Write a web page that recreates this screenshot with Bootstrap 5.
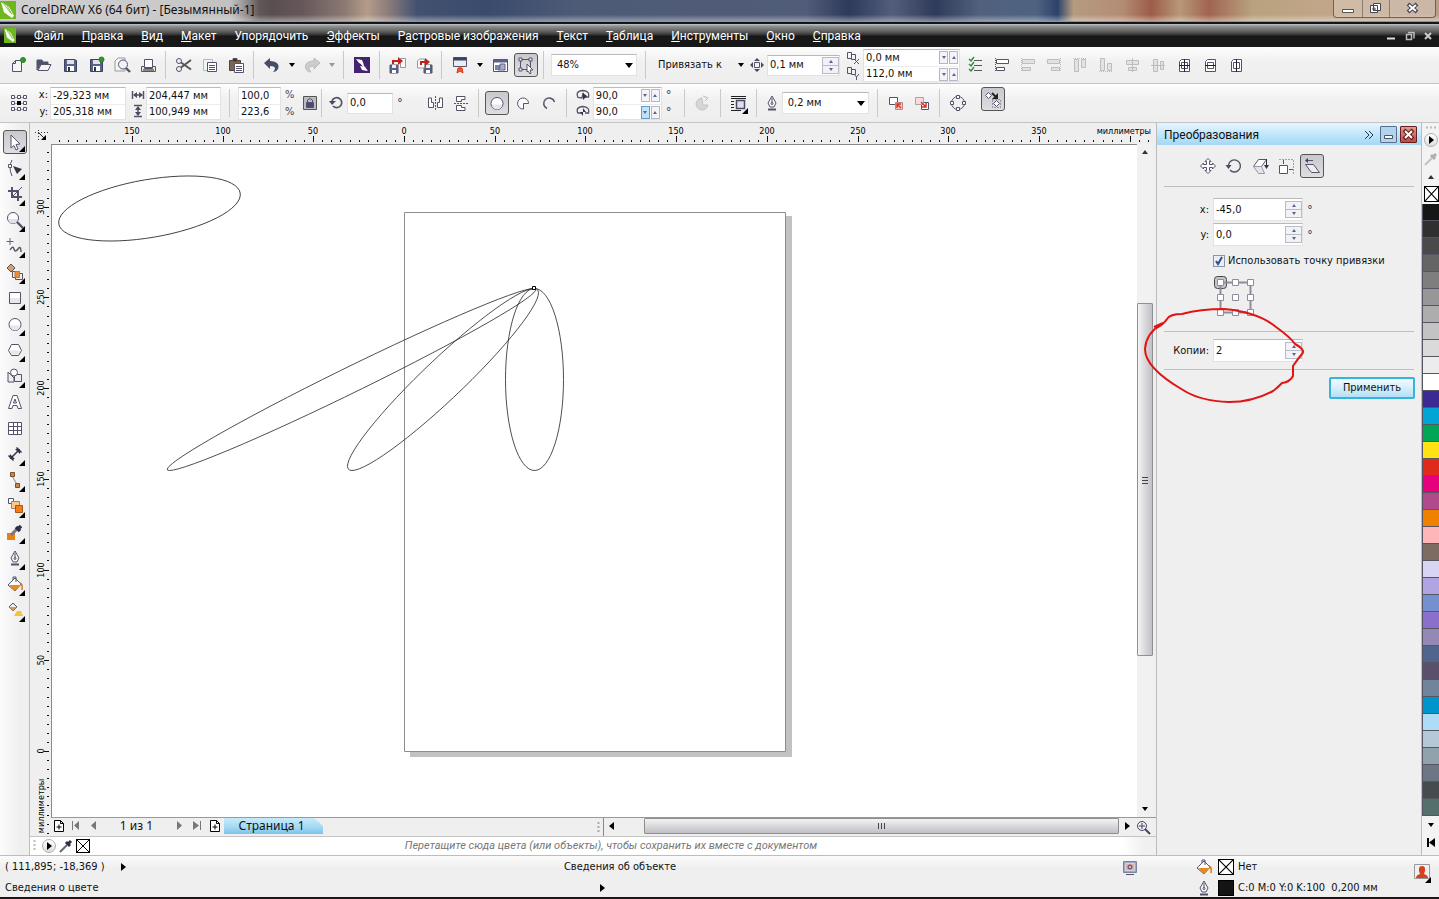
<!DOCTYPE html>
<html lang="ru">
<head>
<meta charset="utf-8">
<meta name="viewport" content="width=device-width, initial-scale=1">
<title>CorelDRAW X6 (64 бит) - [Безымянный-1]</title>
<link rel="stylesheet" href="https://cdn.jsdelivr.net/npm/bootstrap@5.3.0/dist/css/bootstrap.min.css">
<style>
:root{--face:#efefef;--line:#bdbdbd;--ink:#53536a}
body{font:11px/14px "DejaVu Sans Condensed","Noto Sans",sans-serif;color:#111;background:var(--face);overflow:hidden}
button,input,select{font:inherit;color:inherit}
button{background:none;border:0;padding:0}
svg{display:block;flex:none}
.ico{width:20px;height:20px;fill:none;stroke:var(--ink)}
/* window frame */
.titlebar{height:22px;font:12px/20px "Noto Sans",sans-serif;border-bottom:1px solid #8d9098;
 background:linear-gradient(#fff0 70%,#ffffff60),linear-gradient(90deg,#a8a8a8 0,#bcbcbc 16%,#544a4c 18%,#66585a 21%,#8c7a72 24%,#b49c88 25.5%,#8b7c7c 27%,#42516f 29%,#3a4b6c 34%,#4e5b77 40%,#505c78 56%,#2e3a5b 59%,#525e7a 62%,#2f3b5a 65%,#50607d 68%,#4f6482 72%,#2c4369 73.5%,#b59b80 74.6%,#b48c74 78%,#9c5c48 80%,#b89878 82%,#a06450 84%,#b8a27e 87%,#c2a68a 92%,#b89e88 100%)}
.glow{background:linear-gradient(90deg,#d0d0d0,#cacaca 60%,#cacaca00)}
.winbtns{height:18px;border:1px solid #6d6258;border-top:0;border-radius:0 0 4px 4px;background:#ffffff40;margin-right:3px}
.winbtns button+button{border-left:1px solid #8a7c70}
.menubar{height:25px;background:linear-gradient(#c4c6c4 0,#8f918f 10%,#555 36%,#303030 48%,#181818 52%,#181818);border-top:2px solid #111722;font:12px/20px Roboto,sans-serif;color:#fff}
.menubar a{color:#fff;text-decoration:none}
.menubar .entries{gap:18px;margin-left:18px}
/* tool bars */
.bar{background:linear-gradient(#fdfdfd,#f1f1f1 40%,#eee);border-bottom:1px solid #c4c4c4;padding-left:5px}
.bar-std{height:37px}.bar-prop{height:39px}
.tool{width:26px;height:24px;display:flex;align-items:center;justify-content:center;flex:none;position:relative}
.tool.on{width:24px;margin:0 1px;border:1px solid #555;border-radius:3px;background:linear-gradient(#c9c9cd,#dedee2)}
.drop{width:14px;height:24px;flex:none;display:flex;align-items:center;justify-content:center}
.caret{width:0;height:0;border:3px solid transparent;border-top:4px solid #000;border-bottom:0}
.caret.up{border-bottom:4px solid #333;border-top:0}
.caret.dim{border-top-color:#999}
.sep{width:1px;height:28px;background:#c9c9c9;margin:0 5px 0 4px;flex:none}
.field{background:#fff;border:1px solid #e2e2e2;border-top-color:#b9b9b9;display:flex;align-items:center;height:21px}
.field input,.pair input{border:0;background:none;outline:0;padding:0 0 0 2px;min-width:0;width:100%}
.pair{background:#fff;border:1px solid #e2e2e2;border-top-color:#b4bccb;height:33px;flex:none}
.pair>div{height:16px;display:flex;align-items:center}
.pair>div+div{border-top:1px solid #ececec}
.combo{appearance:none;border:1px solid #e2e2e2;border-top-color:#b9b9b9;height:22px;padding:0 5px;flex:none;
 background:#fff url("data:image/svg+xml,%3Csvg xmlns='http://www.w3.org/2000/svg' width='8' height='5'%3E%3Cpath d='M0 0h8L4 5z'/%3E%3C/svg%3E") no-repeat right 3px center}
.mini{width:9px;height:13px;border:1px solid #b4b8c6;background:#f4f4f8;display:flex;align-items:center;justify-content:center;flex:none;margin-right:1px}
.mini.hot{background:#bfe3f8;border-color:#5f9dc8}
.mini .caret,.spin .caret{border-width:2px;border-top:3px solid #5a6494}
.mini .caret.up,.spin .caret.up{border-top:0;border-bottom:3px solid #5a6494}
.spin{width:17px;flex:none}
.spin button{height:9px;width:17px;border:1px solid #b8bcc8;background:#f2f2f6;display:flex;align-items:center;justify-content:center}
.spin button+button{margin-top:-1px}
.lbl{text-align:right;white-space:pre}
.deg{font-size:13px;color:#445}
/* tool box */
.toolbox{width:30px;background:linear-gradient(90deg,#fcfcfc,#efefef 70%);border-right:1px solid #bcbcbc;padding-top:6px;flex:none}
.toolbox .tool{height:26px;width:29px}
.toolbox .tool.on{height:24px;width:24px;margin:1px 3px}
.fly::after{content:"";position:absolute;right:4px;bottom:1px;border:3px solid transparent;border-right-color:#000;border-bottom-color:#000}
.toolbox .on.fly::after{right:1px;bottom:1px}
/* drawing window */
.ruler-h{height:21px}.ruler-v{width:21px}
.rule{font-size:9px}
.paper{background:#fff;border-left:1px solid #8a8a8a;border-top:1px solid #8a8a8a;position:relative;overflow:hidden}
.vscroll{width:16px;margin-right:3px;background:#f1f1f1}
.vscroll .arrow,.hscroll .arrow{width:16px;height:16px;display:flex;align-items:center;justify-content:center;flex:none}
.vthumb{border:1px solid #8f8f8f;border-radius:1px;background:linear-gradient(90deg,#f4f4f4,#dcdcde 45%,#c0c0c6)}
.hthumb{border:1px solid #8f8f8f;border-radius:1px;background:linear-gradient(#f4f4f4,#dcdcde 45%,#c0c0c6);height:16px}
.pages{height:19px;border-top:1px solid #999}
.pagetext{font:12px/16px "Noto Sans",sans-serif}
.pagetab{width:99px;height:16px;background:linear-gradient(#c8eafa,#a5daf5 55%,#7cc3ea);clip-path:polygon(0 0,91% 0,100% 50%,100% 100%,0 100%)}
.docpal{height:19px;background:linear-gradient(90deg,#fff 97%,#f0f0f0 99%);border-top:1px solid #c4c4c4}
.docpal em{color:#777;font:italic 11px/16px Roboto,sans-serif}
.round{width:14px;height:14px;border:1px solid #b0b0b0;border-radius:50%;background:linear-gradient(#fff,#ddd);display:flex;align-items:center;justify-content:center}
.round::after,.play{content:"";width:0;height:0;border:4px solid transparent;border-left:5px solid #000;border-right:0}
.round::after{margin-left:1px}
.play{display:inline-block}
.none{width:14px;height:14px;background:#fff;border:1px solid #000;flex:none}
/* docker */
.docker{width:266px;border-left:1px solid #bcbcbc;border-right:1px solid #bcbcbc;flex:none;position:relative}
.dockhead{height:21px;margin-top:1px;padding-left:7px;background:linear-gradient(#e4f5fe,#bfe6fb 50%,#a4d8f5);font:12px/20px Roboto,sans-serif}
.dockhead button{width:17px;height:17px;border:1px solid #56708e;background:#b5d3ec;border-radius:1px}
.dockhead .shut{border-color:#6a1d1d;background:linear-gradient(#e09a90,#c04a44)}
.rulerline{height:1px;background:#bfbfbf;margin:0 7px}
.dockrow{margin-left:14px;gap:4px}
.dockrow .lbl{width:38px}
.dockrow .field{width:90px;height:23px}
.apply{width:86px;height:22px;margin:7px 6px 0 auto;border:2px solid #35b4dc;border-radius:2px;background:linear-gradient(#f1fafd,#d8effa 48%,#b4e0f4)}
.tick{appearance:none;width:12px;height:12px;margin:0;border:1px solid #8496ac;flex:none;
 background:#e9eff6 url("data:image/svg+xml,%3Csvg xmlns='http://www.w3.org/2000/svg' width='10' height='10'%3E%3Cpath d='M2 5l2 3l4-7' fill='none' stroke='%233a4c88' stroke-width='2'/%3E%3C/svg%3E") center no-repeat}
.scribble{position:absolute;left:-17px;top:181px;pointer-events:none}
/* colour column */
.palette{width:17px;background:#f3f3f3;flex:none}
.swatch{height:17px;border-bottom:1px solid #565660;border-left:1px solid #565660;width:17px}
.status{height:44px;background:linear-gradient(#fbfbfb,#efefef 30%);border-top:1px solid #bdbdbd;border-bottom:2px solid #1c1518;padding-left:5px}
.status .line{height:21px;display:flex;align-items:center}
.outlinecolor{background:#141414}
</style>
</head>
<body class="vh-100 d-flex flex-column">
<svg width="0" height="0" class="position-absolute" aria-hidden="true">
<symbol id="corel" viewBox="0 0 16 16" preserveAspectRatio="none"><path d="M0 0h16v16H0z" fill="#6fb71f" stroke="none"/><path d="M1 1l8 4 5 8-2 2-8-5z" fill="#fff" stroke="none"/><path d="M4 3l7 8M7 4l5 8" stroke="#6fb71f" stroke-width=".8"/></symbol>
<symbol id="new" viewBox="0 0 20 20"><path d="M4.500 8.500l3-3h6v11h-9z" fill="#f6f6f6"/><path d="M4.500 8.500h3v-3"/><circle cx="15" cy="5" r="2.500" fill="#2e9b25" stroke="#2e7d25"/></symbol>
<symbol id="open" viewBox="0 0 20 20"><path d="M3 15V5h5l1 2h5v3H6z" fill="#4b5274"/><path d="M4 15.500l3-6h10l-3 6z" fill="#f4f4f4"/></symbol>
<symbol id="save" viewBox="0 0 20 20"><path d="M4.500 4.500h10l2 1v11h-12z" fill="#5a6288" stroke="#3b4263"/><path d="M7 5h7v4H7z" fill="#dfe1ea" stroke="none"/><path d="M7 11h7v5H7z" fill="#fff" stroke="none"/><path d="M8 12h2v4H8z" fill="#334" stroke="none"/></symbol>
<symbol id="saveas" viewBox="0 0 20 20"><use href="#save"/><circle cx="15.500" cy="4.500" r="2.500" fill="#2e9b25" stroke="#2e7d25"/></symbol>
<symbol id="preview" viewBox="0 0 20 20"><path d="M3 16V6l3-3h7v13z" fill="#f4f4f4" stroke="#999"/><circle cx="11" cy="9.500" r="4.500" fill="#eef3fa"/><path d="M14 13l4 4" stroke-width="2.400"/></symbol>
<symbol id="print" viewBox="0 0 20 20"><path d="M6.500 4.500h8v8h-8z" fill="#fff"/><path d="M3.500 11.500h3v2h8v-2h3v5h-14z" fill="#e8eadf"/><path d="M5 15h11" stroke="#222"/></symbol>
<symbol id="cut" viewBox="0 0 20 20"><circle cx="5" cy="6" r="2.500"/><circle cx="5" cy="14" r="2.500"/><path d="M7 7.500l10 7M7 12.500l10-7.500" stroke-width="2" stroke="#555"/></symbol>
<symbol id="copy" viewBox="0 0 20 20"><path d="M3.500 4.500h9v11h-9z" fill="#eef6f0" stroke="#a8c0b4"/><path d="M7.500 7.500h9v9h-9z" fill="#fff"/><path d="M9 10.500h6M9 12.500h6M9 14.500h6"/></symbol>
<symbol id="paste" viewBox="0 0 20 20"><path d="M3.500 5.500h11v10h-11z" fill="#7c6650" stroke="#54432f"/><path d="M7 3.500h4v3H7z" fill="#333"/><path d="M8.500 8.500h9v9h-9z" fill="#fff"/><path d="M10 11.500h6M10 13.500h6M10 15.500h6"/></symbol>
<symbol id="undo" viewBox="0 0 20 20"><path d="M2 8l6-5v3c7 0 10 4 8 8-1 2-3 3-5 3 3-3 3-6-3-6v3z" fill="#474d68" stroke="none"/></symbol>
<symbol id="redo" viewBox="0 0 20 20"><path d="M18 8l-6-5v3c-7 0-10 4-8 8 1 2 3 3 5 3-3-3-3-6 3-6v3z" fill="#ccc" stroke="#bbb"/></symbol>
<symbol id="launch" viewBox="0 0 20 20"><path d="M2 2h16v16H2z" fill="#44246e" stroke="none"/><path d="M4 4l6 1 2 5-5-2zM16 16l-6-1-2-4 5 1z" fill="#fff" stroke="none"/><path d="M7 5l7 10" stroke="#fff" stroke-width="1.500"/></symbol>
<symbol id="import" viewBox="0 0 20 20"><path d="M2 10h8v8H2z" fill="#5a6288"/><path d="M4 10h4v3H4z" fill="#eee" stroke="none"/><path d="M4 15h4v3H4z" fill="#fff" stroke="none"/><path d="M12.500 3.500h5v9h-5z" fill="#fafafa" stroke="#999"/><path d="M5 9V6h6" stroke="#c0201a" stroke-width="2"/><path d="M10 2l5 4-5 4z" fill="#c0201a" stroke="none"/></symbol>
<symbol id="export" viewBox="0 0 20 20"><path d="M10 10h8v8h-8z" fill="#5a6288"/><path d="M12 10h4v3h-4z" fill="#eee" stroke="none"/><path d="M12 15h4v3h-4z" fill="#fff" stroke="none"/><path d="M3.500 6l2-2h5v9h-7z" fill="#fafafa" stroke="#999"/><path d="M7 10V7h5" stroke="#c0201a" stroke-width="2"/><path d="M11 3l5 4-5 4z" fill="#c0201a" stroke="none"/></symbol>
<symbol id="welcome" viewBox="0 0 20 20"><path d="M3.500 2.500h13v9h-13z" fill="#e8ecf4"/><path d="M3.500 4h13" stroke-width="3" stroke="#3b4263"/><path d="M10 11v2M7 18l1-5h4l1 5-3-2z" fill="#f05a28" stroke="#d83a1a"/></symbol>
<symbol id="window" viewBox="0 0 20 20"><path d="M3.500 4.500h14v12h-14z" fill="#fff"/><path d="M4 6h13" stroke-width="3" stroke="#5a6288"/><path d="M5 10h6v5H5z" fill="#7a84aa" stroke="none"/><path d="M10 9h5v6h-7l2-2z" fill="#a7aec8" stroke="#5a6288"/></symbol>
<symbol id="snap" viewBox="0 0 20 20"><path d="M4.500 4.500h10v10h-10z"/><path d="M3 3h3v3H3zM13 3h3v3h-3zM3 13h3v3H3z" fill="#eee"/><path d="M11 9l6 6-3 0 1 3-1 1-2-3-1 1z" fill="#fff"/></symbol>
<symbol id="nudge" viewBox="0 0 20 20"><path d="M7.500 7.500h5v5h-5z"/><path d="M10 3l3 3H7zM10 17l3-3H7zM3 10l3-3v6zM17 10l-3-3v6z" fill="#4a4a62" stroke="none"/></symbol>
<symbol id="dupx" viewBox="0 0 14 16"><path d="M1.500 3.500h4v6h-4zM5.500 5.500h4v5h-4zM8 10l5 5M13 10l-5 5"/></symbol>
<symbol id="dupy" viewBox="0 0 14 16"><path d="M1.500 2.500h4v6h-4zM5.500 4.500h4v5h-4zM8 9l2.500 3L13 9M10.500 12v3"/></symbol>
<symbol id="options" viewBox="0 0 20 20"><path d="M3 4l2 2 3-4M3 9l2 2 3-4M3 14l2 2 3-4" stroke="#2f8a3a" stroke-width="1.400"/><path d="M8 5.500h8M8 10.500h8M8 15.500h8" stroke="#556"/></symbol>
<symbol id="al" viewBox="0 0 20 20"><path d="M3.500 3v14" stroke-dasharray="1 1"/><path d="M4.500 4.500h12v4h-12zM4.500 12.500h8v3h-8z" fill="#fff"/></symbol>
<symbol id="al2" viewBox="0 0 20 20"><path d="M3.500 3v14" stroke-dasharray="1 1"/><path d="M4.500 4.500h12v4h-12zM4.500 12.500h8v3h-8z" fill="#e2e2e2"/></symbol>
<symbol id="ar" viewBox="0 0 20 20"><path d="M16.500 3v14" stroke-dasharray="1 1"/><path d="M3.500 4.500h12v4h-12zM7.500 12.500h8v3h-8z" fill="#e2e2e2"/></symbol>
<symbol id="at" viewBox="0 0 20 20"><path d="M3 3.500h14" stroke-dasharray="1 1"/><path d="M4.500 4.500h4v12h-4zM11.500 4.500h4v8h-4z" fill="#e2e2e2"/></symbol>
<symbol id="ab" viewBox="0 0 20 20"><path d="M3 16.500h14" stroke-dasharray="1 1"/><path d="M4.500 3.500h4v12h-4zM11.500 8.500h4v7h-4z" fill="#e2e2e2"/></symbol>
<symbol id="ac" viewBox="0 0 20 20"><path d="M4.500 5.500h12v4h-12zM6.500 12.500h8v3h-8z" fill="#e2e2e2"/><path d="M10.500 3v14"/></symbol>
<symbol id="am" viewBox="0 0 20 20"><path d="M5.500 4.500h4v12h-4zM12.500 6.500h3v8h-3z" fill="#e2e2e2"/><path d="M3 10.500h14"/></symbol>
<symbol id="p1" viewBox="0 0 20 20"><path d="M5.500 6.500l2-2h8v12h-10zM7.500 7.500h6v6h-6z" fill="#fff"/><path d="M5 10.500h11M10.500 4v13" stroke="#223"/></symbol>
<symbol id="p2" viewBox="0 0 20 20"><path d="M5.500 6.500l2-2h8v12h-10z" fill="#fff"/><path d="M7.500 7.500h6v6h-6z"/><path d="M5 10.500h11" stroke="#223"/></symbol>
<symbol id="p3" viewBox="0 0 20 20"><path d="M5.500 6.500l2-2h8v12h-10z" fill="#fff"/><path d="M7.500 7.500h6v6h-6z"/><path d="M10.500 4v13" stroke="#223"/></symbol>
<symbol id="origin" viewBox="0 0 20 20"><path d="M4 4.500h12M4 10.500h12M4 16.500h12" stroke="#9aa"/><g fill="#fff"><path d="M2.500 2.500h3v3h-3zM8.500 2.500h3v3h-3zM14.500 2.500h3v3h-3zM2.500 8.500h3v3h-3zM14.500 8.500h3v3h-3zM2.500 14.500h3v3h-3zM8.500 14.500h3v3h-3zM14.500 14.500h3v3h-3z"/></g><path d="M8 8h4v4H8z" fill="#000" stroke="none"/></symbol>
<symbol id="width" viewBox="0 0 14 14"><path d="M1.500 3v8M12.500 3v8M3 7h8" stroke-width="1.500"/><path d="M6 4v6L2 7zM8 4v6l4-3z" fill="#4a4a62" stroke="none"/></symbol>
<symbol id="height" viewBox="0 0 14 14"><path d="M3 1.500h8M3 12.500h8M7 3v8" stroke-width="1.500"/><path d="M4 6h6L7 2zM4 8h6l-3 4z" fill="#4a4a62" stroke="none"/></symbol>
<symbol id="lock" viewBox="0 0 14 14"><path d="M.5.500h13v13H.5z" fill="#bcbcc6" stroke="#555"/><path d="M4.500 6V4q2.500-3 5 0v2"/><path d="M3.500 6.500h7v5h-7z" fill="#4a4a72"/></symbol>
<symbol id="rotate" viewBox="0 0 20 20"><path d="M5 8a5 5 0 1 1 1 5" stroke-width="1.700"/><path d="M2 8h7l-4 4z" fill="#4a4a62" stroke="none"/></symbol>
<symbol id="turn" viewBox="0 0 20 20"><path d="M4.500 9a6 6 0 1 1 1.500 5" stroke-width="1.400"/><path d="M1.500 9h6l-3 4z" fill="#4a4a62" stroke="none"/></symbol>
<symbol id="mirh" viewBox="0 0 20 20"><path d="M10.500 3v14" stroke-dasharray="2 1"/><path d="M3.500 5v9.500h5v-5h-2V5zM17.500 5v9.500h-5v-5h2V5z" fill="#fff"/></symbol>
<symbol id="mirv" viewBox="0 0 20 20"><path d="M3 10.500h15" stroke-dasharray="2 1"/><path d="M14 3.500H5.500v5h5v-2H14zM14 17.500H5.500v-5h5v2H14z" fill="#fff"/></symbol>
<symbol id="ell" viewBox="0 0 20 20"><circle cx="10" cy="10.500" r="6" fill="#fff"/><path d="M5 11.500h10a5 5 0 0 1-10 0z" fill="#e6e6ec" stroke="none"/></symbol>
<symbol id="pie" viewBox="0 0 20 20"><path d="M10.500 10.500V16A5.500 5.500 0 1 1 15.500 9.500v1z" fill="#fff"/></symbol>
<symbol id="arc" viewBox="0 0 20 20"><path d="M8 15.500A5.500 5.500 0 1 1 15.500 9" stroke-width="1.500"/></symbol>
<symbol id="ang1" viewBox="0 0 14 14"><path d="M2 9.500Q-1 3 7 2.500 14 3 12.500 9H8l-1-4-1 5z" stroke-width="1.300"/><path d="M7 5v7l4-4z" fill="#334" stroke="none"/></symbol>
<symbol id="ang2" viewBox="0 0 14 14"><path d="M2 9.500Q-1 3 7 2.500 14 3 12.500 9H9M2 9h4" stroke-width="1.300"/><path d="M7 4v8l-3-4h6z" fill="#334" stroke="none"/></symbol>
<symbol id="dir" viewBox="0 0 20 20"><path d="M9 5a6 6 0 1 0 6 7h-5z" fill="#d6d6d6" stroke="#c4c4c4"/><path d="M10 3l5 2-3 3" stroke="#bbb"/></symbol>
<symbol id="wrap" viewBox="0 0 20 20"><path d="M2 3.500h15M2 5.500h15M2 8.500h3M2 11.500h3M2 14.500h3M2 17.500h10" stroke="#222"/><path d="M7.500 7.500h8v8h-8z" fill="#dde0ec" stroke="#4a4a62" stroke-width="1.500"/></symbol>
<symbol id="nib" viewBox="0 0 20 20"><path d="M10 3l4 7-2 4H8l-2-4z" fill="#f6f6f6"/><path d="M10 5v5"/><circle cx="10" cy="10.500" r="1"/><path d="M6 16.500h8" stroke-width="2"/></symbol>
<symbol id="tofront" viewBox="0 0 20 20"><path d="M3.500 4.500h8v7h-8z" fill="#fff"/><path d="M9.500 9.500h7v7h-7z" fill="#f7c9c4" stroke="#b9868c"/><path d="M15 15l-4-4m0 4v-4h4" stroke="#d8341e" stroke-width="1.500"/></symbol>
<symbol id="toback" viewBox="0 0 20 20"><path d="M9.500 9.500h7v7h-7z" fill="#fff"/><path d="M3.500 4.500h8v7h-8z" fill="#f7dcdc" stroke="#b99aa8"/><path d="M9 9l5 5m0-4v4h-4" stroke="#d8341e" stroke-width="1.500"/></symbol>
<symbol id="curves" viewBox="0 0 20 20"><circle cx="10" cy="10" r="6.500"/><path d="M8.500 2.500h3v3h-3zM8.500 14.500h3v3h-3zM2.500 8.500h3v3h-3zM14.500 8.500h3v3h-3z" fill="#fff"/></symbol>
<symbol id="treat" viewBox="0 0 20 20"><path d="M2.500 6.500l3-3 3 3-3 3zM10.500 14.500l3-3 3 3-3 3z" fill="#fff"/><path d="M9 4l4 4" stroke="#222" stroke-width="2"/><path d="M15 4v6H9z" fill="#222" stroke="none"/><path d="M9.500 10.500h8v8h-8z" stroke-dasharray="1 2"/></symbol>
<symbol id="pick" viewBox="0 0 20 20"><path d="M6 3l9 9-4 .5 2 4.500-2 1-2-4.500-3 2.500z" fill="#fff" stroke="#556"/></symbol>
<symbol id="shape" viewBox="0 0 20 20"><path d="M7 2q-4 7 0 16" /><path d="M3.500 6.500h3v3h-3z" fill="#fff"/><path d="M8 8l9 3-5 5z" fill="#334" stroke="none"/></symbol>
<symbol id="crop" viewBox="0 0 20 20"><path d="M7 3v10h10M3 7h10v10" stroke-width="2"/><path d="M7 13L17 3"/></symbol>
<symbol id="zoomt" viewBox="0 0 20 20"><circle cx="8" cy="8" r="5.500" fill="#fff"/><path d="M3.500 9h9a4.500 4.500 0 0 1-9 0z" fill="#dfe2ee" stroke="none"/><path d="M12 12l6 6" stroke-width="2.400"/></symbol>
<symbol id="free" viewBox="0 0 20 20"><path d="M5 2v7M1.500 5.500h7" stroke="#667"/><path d="M5 14q3-5 4-1t4 0 3 3" stroke="#556" stroke-width="1.400"/></symbol>
<symbol id="smart" viewBox="0 0 20 20"><path d="M2 6l4-4 4 4-4 4z" fill="#d9a060"/><path d="M7.500 9.500h7v6h-7z" fill="#eee"/><path d="M10.500 11.500h7v6h-7z" fill="#f4ece4" fill-opacity=".8"/><path d="M10 9.500h4.500v6H10z" fill="#ea8b3c" stroke="#c4763a"/></symbol>
<symbol id="rect" viewBox="0 0 20 20"><path d="M4.500 4.500h11v11h-11z" fill="#fff"/><path d="M5 10h10v5H5z" fill="#e6e6ec" stroke="none"/></symbol>
<symbol id="poly" viewBox="0 0 20 20"><path d="M3.500 10.500l3-6h7l3 6-3 5h-7z" fill="#fff"/><path d="M5 10.500h10l-2 4H7z" fill="#e6e6ec" stroke="none"/></symbol>
<symbol id="basic" viewBox="0 0 20 20"><path d="M3 6l6 6v4H3z" fill="#eee"/><path d="M9.500 8.500h7v7h-7z" fill="#eee"/><circle cx="9" cy="6.500" r="3.500" fill="#fff"/></symbol>
<symbol id="textt" viewBox="0 0 20 20"><path d="M8 3.500h4l4.500 13h-3.500l-1-3h-4l-1 3H3.500zM10 7l-1.500 4h3z" fill="#fff"/></symbol>
<symbol id="table" viewBox="0 0 20 20"><path d="M3.500 4.500h13v12h-13zM3.500 8.500h13M3.500 12.500h13M8.500 4v12M12.500 4v12" fill="#fff"/></symbol>
<symbol id="dim" viewBox="0 0 20 20"><path d="M6 14l8-8M3.500 11.500l5 5M11.500 3.500l5 5" stroke="#334" stroke-width="1.500"/><path d="M5 10v5h5zM15 10V5h-5z" fill="#334" stroke="none"/></symbol>
<symbol id="conn" viewBox="0 0 20 20"><path d="M7 6l6 10" stroke="#889"/><path d="M5.500 2.500h4v4h-4zM10.500 13.500h4v4h-4z" fill="#c98744" stroke="#7b4d28"/></symbol>
<symbol id="blend" viewBox="0 0 20 20"><path d="M3.500 2.500h5v5h-5z" fill="#fff"/><path d="M6.500 5.500h8v7h-8z" fill="#fbc98a" stroke="#a77"/><path d="M10.500 9.500h7v7h-7z" fill="#f57c14" stroke="#a4561c"/></symbol>
<symbol id="pipet" viewBox="0 0 20 20"><path d="M2 11h8v7H2z" fill="#ee7d14" stroke="none"/><path d="M6 13l6-6" stroke="#778" stroke-width="3"/><path d="M11 5l4 4M13 7l3-3" stroke="#2b3048" stroke-width="3.500"/></symbol>
<symbol id="drop1" viewBox="0 0 20 20"><path d="M4 16l7-7" stroke="#667" stroke-width="2"/><path d="M10 6l4 4M12 8l3-3" stroke="#2b3048" stroke-width="3"/></symbol>
<symbol id="fill" viewBox="0 0 20 20"><path d="M3 11l7-7 6 6-6 7z" fill="#fff"/><path d="M4 11h12l-6 6z" fill="#e88a1c" stroke="none"/><path d="M8 6V3h3v5"/><path d="M15 9q3 1 2 7" stroke="#d87820" stroke-width="1.500"/></symbol>
<symbol id="ifill" viewBox="0 0 20 20"><path d="M4 7l4-4 4 4-4 4z" fill="#eee"/><path d="M4 7h8l-4 4z" fill="#d99a52" stroke="none"/><path d="M9 16l3-5h4l2 5z" fill="#f3c43a" stroke="none"/></symbol>
<symbol id="X" viewBox="0 0 12 12" preserveAspectRatio="none"><path d="M0 0l12 12M12 0L0 12" stroke="#000" fill="none"/></symbol>
<symbol id="addpage" viewBox="0 0 12 14"><path d="M1.500 1.500h6l3 3v8h-9zM7.500 1.500v3h3M6 5.500v5M3.500 8h5" stroke="#000" fill="#fff"/></symbol>
<symbol id="move" viewBox="0 0 20 20"><path d="M10 2.500l3 3h-1.500v3h3V7l3 3-3 3v-1.500h-3v3H13l-3 3-3-3h1.500v-3h-3V13l-3-3 3-3v1.500h3v-3H7z" fill="#fff"/></symbol>
<symbol id="scale" viewBox="0 0 20 20"><path d="M3.500 10.500l5-7h8l-5 7z" fill="#fff"/><path d="M3.500 10.500l5 7h6l-3-7z" fill="#e4e4ea" stroke="#99a"/><path d="M16.500 3v7" stroke="#334"/><path d="M14 9h5l-2.500 4z" fill="#334" stroke="none"/></symbol>
<symbol id="size" viewBox="0 0 20 20"><path d="M3.500 3.500h14v14" stroke-dasharray="1 2"/><path d="M3.500 9.500h8v8h-8z" fill="#fff"/><path d="M7.500 4v4M13 13.500h4"/></symbol>
<symbol id="skew" viewBox="0 0 20 20"><path d="M3.500 8.500h8l6 8h-8z" fill="#eee"/><path d="M5 4.500h6"/><path d="M6 2v5L3 4.500z" fill="#445" stroke="none"/></symbol>
<symbol id="monitor" viewBox="0 0 20 20"><path d="M3.500 4.500h13v11h-13z" fill="#9aa6c4" stroke="#7a84a4"/><path d="M5.500 6.500h9v7h-9z" fill="#dcb0a8" stroke="#d4d4dc"/><circle cx="10" cy="10" r="2" stroke="#446"/><path d="M6 17.500h8"/></symbol>
<symbol id="user" viewBox="0 0 20 20"><path d="M2.500 2.500h15v14h-15z" fill="#eef0f4" stroke="#999"/><path d="M4 16q0-3 4-4-3-8 2-8t2 8q4 1 4 4z" fill="#d6421e" stroke="none"/></symbol>
</svg>

<header class="titlebar d-flex align-items-start flex-shrink-0">
 <div class="glow d-flex align-items-center gap-1 pe-3"><svg width="17" height="20"><use href="#corel" width="16" height="18" y="1"/></svg><span>CorelDRAW X6 (64 бит) - [Безымянный-1]</span></div>
 <div class="winbtns d-flex ms-auto">
  <button aria-label="Свернуть"><svg width="28" height="17"><path d="M8.500 9.500h11v3h-11z" fill="#fff" stroke="#555"/></svg></button>
  <button aria-label="Восстановить"><svg width="26" height="17"><path d="M10.500 3.500h7v7h-7zM7.500 5.500h7v7h-7zM10 8h2v2h-2z" fill="#fff" stroke="#445"/></svg></button>
  <button aria-label="Закрыть"><svg width="45" height="17"><path d="M18 4l9 8M27 4l-9 8" stroke="#445" stroke-width="4"/><path d="M19 5l7 6M26 5l-7 6" stroke="#fff" stroke-width="2"/></svg></button>
 </div>
</header>

<nav class="menubar d-flex align-items-center flex-shrink-0 ps-1">
 <svg width="12" height="15"><use href="#corel" width="12" height="15"/></svg>
 <div class="entries d-flex">
 <a href="#"><u>Ф</u>айл</a><a href="#"><u>П</u>равка</a><a href="#"><u>В</u>ид</a><a href="#"><u>М</u>акет</a><a href="#">Упоря<u>д</u>очить</a><a href="#"><u>Э</u>ффекты</a><a href="#">Р<u>а</u>стровые изображения</a><a href="#"><u>Т</u>екст</a><a href="#"><u>Т</u>аблица</a><a href="#"><u>И</u>нструменты</a><a href="#"><u>О</u>кно</a><a href="#"><u>С</u>правка</a></div>
 <div class="ms-auto d-flex">
  <button aria-label="Свернуть документ"><svg width="19" height="14"><path d="M4 9.500h8" stroke="#ddd" stroke-width="2"/></svg></button>
  <button aria-label="Восстановить документ"><svg width="19" height="14"><path d="M4.500 5.500h5v5h-5zM6 3.500h6v6" fill="none" stroke="#bbb" stroke-width="1.500"/></svg></button>
  <button aria-label="Закрыть документ"><svg width="18" height="14"><path d="M4 4l6 6M10 4l-6 6" stroke="#ccc" stroke-width="2"/></svg></button>
 </div>
</nav>

<div class="bar bar-std d-flex align-items-center flex-shrink-0" role="toolbar" aria-label="Стандарт">
 <button class="tool" aria-label="Создать"><svg class="ico"><use href="#new"/></svg></button>
 <button class="tool" aria-label="Открыть"><svg class="ico"><use href="#open"/></svg></button>
 <button class="tool" aria-label="Сохранить"><svg class="ico"><use href="#save"/></svg></button>
 <button class="tool" aria-label="Сохранить как"><svg class="ico"><use href="#saveas"/></svg></button>
 <button class="tool" aria-label="Просмотр"><svg class="ico"><use href="#preview"/></svg></button>
 <button class="tool" aria-label="Печать"><svg class="ico"><use href="#print"/></svg></button>
 <i class="sep"></i>
 <button class="tool" aria-label="Вырезать"><svg class="ico"><use href="#cut"/></svg></button>
 <button class="tool" aria-label="Копировать"><svg class="ico"><use href="#copy"/></svg></button>
 <button class="tool" aria-label="Вставить"><svg class="ico"><use href="#paste"/></svg></button>
 <i class="sep"></i>
 <button class="tool" aria-label="Отменить"><svg class="ico"><use href="#undo"/></svg></button>
 <button class="drop" aria-label="Список отмены"><i class="caret"></i></button>
 <button class="tool" aria-label="Повторить"><svg class="ico"><use href="#redo"/></svg></button>
 <button class="drop" aria-label="Список повтора"><i class="caret dim"></i></button>
 <i class="sep"></i>
 <button class="tool" aria-label="Запуск приложений"><svg class="ico"><use href="#launch"/></svg></button>
 <i class="sep"></i>
 <button class="tool" aria-label="Импорт"><svg class="ico"><use href="#import"/></svg></button>
 <button class="tool" aria-label="Экспорт"><svg class="ico"><use href="#export"/></svg></button>
 <i class="sep"></i>
 <button class="tool" aria-label="Запуск"><svg class="ico"><use href="#welcome"/></svg></button>
 <button class="drop" aria-label="Список запуска"><i class="caret"></i></button>
 <button class="tool" aria-label="Экран приветствия"><svg class="ico"><use href="#window"/></svg></button>
 <button class="tool on" aria-label="Выделение"><svg class="ico"><use href="#snap"/></svg></button>
 <i class="sep"></i>
 <select class="combo" style="width:86px;margin-left:2px" aria-label="Масштаб"><option>48%</option></select>
 <i class="sep ms-2 me-2"></i>
 <button class="d-flex align-items-center gap-3 ms-1 me-2 text-nowrap" style="width:81px"><span>Привязать к</span><i class="caret"></i></button>
 <svg class="ico"><use href="#nudge"/></svg>
 <div class="field" style="width:73px"><input value="0,1 мм" aria-label="Смещение"><span class="spin"><button aria-label="Больше"><i class="caret up"></i></button><button aria-label="Меньше"><i class="caret"></i></button></span></div>
 <div style="margin-left:6px"><svg class="ico" style="width:14px;height:16px"><use href="#dupx"/></svg><svg class="ico" style="width:14px;height:16px"><use href="#dupy"/></svg></div>
 <div class="pair" style="width:97px;margin-left:3px">
  <div><input value="0,0 мм" aria-label="Дублирование x"><button class="mini" aria-label="Меньше"><i class="caret"></i></button><button class="mini" aria-label="Больше"><i class="caret up"></i></button></div>
  <div><input value="112,0 мм" aria-label="Дублирование y"><button class="mini" aria-label="Меньше"><i class="caret"></i></button><button class="mini" aria-label="Больше"><i class="caret up"></i></button></div>
 </div>
 <div class="d-flex" id="align" style="margin-left:3px"></div>
</div>

<div class="bar bar-prop d-flex align-items-center flex-shrink-0" role="toolbar" aria-label="Панель свойств">
 <svg class="ico" style="margin:0 4px"><use href="#origin"/></svg>
 <div class="lbl" style="width:15px;line-height:17px"><label for="px">x:</label><br><label for="py">y:</label></div>
 <div class="pair" style="width:76px;margin-left:2px"><div><input id="px" value="-29,323 мм"></div><div><input id="py" value="205,318 мм"></div></div>
 <div style="margin:0 1px 0 5px"><svg class="ico" style="width:14px;height:16px"><use href="#width"/></svg><svg class="ico" style="width:14px;height:16px"><use href="#height"/></svg></div>
 <div class="pair" style="width:75px"><div><input value="204,447 мм" aria-label="Ширина"></div><div><input value="100,949 мм" aria-label="Высота"></div></div>
 <i class="sep ms-2 me-2"></i>
 <div class="pair" style="width:43px"><div><input value="100,0" aria-label="Масштаб x"></div><div><input value="223,6" aria-label="Масштаб y"></div></div>
 <div style="width:22px;line-height:17px;padding-left:4px;color:#445">%<br>%</div>
 <button aria-label="Сохранять пропорции"><svg class="ico" style="width:14px;height:14px"><use href="#lock"/></svg></button>
 <i class="sep"></i>
 <svg class="ico"><use href="#rotate"/></svg>
 <div class="field" style="width:46px"><input value="0,0" aria-label="Угол поворота"></div><span class="deg ps-1 pe-3">°</span>
 <button class="tool" style="margin-left:3px" aria-label="Отразить по горизонтали"><svg class="ico"><use href="#mirh"/></svg></button>
 <button class="tool" aria-label="Отразить по вертикали"><svg class="ico"><use href="#mirv"/></svg></button>
 <i class="sep"></i>
 <button class="tool on" aria-label="Эллипс"><svg class="ico"><use href="#ell"/></svg></button>
 <button class="tool" aria-label="Сектор"><svg class="ico"><use href="#pie"/></svg></button>
 <button class="tool" aria-label="Дуга"><svg class="ico"><use href="#arc"/></svg></button>
 <i class="sep"></i>
 <div style="margin:0 3px 0 4px"><svg class="ico" style="width:14px;height:16px"><use href="#ang1"/></svg><svg class="ico" style="width:14px;height:16px"><use href="#ang2"/></svg></div>
 <div class="pair" style="width:69px">
  <div><input value="90,0" aria-label="Начальный угол"><button class="mini" aria-label="Меньше"><i class="caret"></i></button><button class="mini" aria-label="Больше"><i class="caret up"></i></button></div>
  <div><input value="90,0" aria-label="Конечный угол"><button class="mini hot" aria-label="Меньше"><i class="caret"></i></button><button class="mini" aria-label="Больше"><i class="caret up"></i></button></div>
 </div>
 <div class="deg" style="line-height:17px;padding:0 8px 0 4px">°<br>°</div>
 <i class="sep"></i>
 <button class="tool" aria-label="Направление"><svg class="ico"><use href="#dir"/></svg></button>
 <i class="sep"></i>
 <button class="tool fly" aria-label="Обтекание текстом"><svg class="ico"><use href="#wrap"/></svg></button>
 <i class="sep"></i>
 <svg class="ico"><use href="#nib"/></svg>
 <select class="combo" style="width:87px" aria-label="Толщина абриса"><option>0,2 мм</option></select>
 <i class="sep ms-2"></i>
 <button class="tool" aria-label="На передний план"><svg class="ico"><use href="#tofront"/></svg></button>
 <button class="tool" aria-label="На задний план"><svg class="ico"><use href="#toback"/></svg></button>
 <i class="sep"></i>
 <button class="tool" aria-label="Преобразовать в кривую"><svg class="ico"><use href="#curves"/></svg></button>
 <button class="tool on mb-2" style="margin-left:10px" aria-label="Обработка как заполненных"><svg class="ico"><use href="#treat"/></svg></button>
</div>

<main class="d-flex flex-fill" style="min-height:0">
 <aside class="toolbox" id="toolbox" aria-label="Инструменты"></aside>
 <section class="d-flex flex-column flex-fill" style="min-width:0">
  <div class="d-flex flex-fill" style="min-height:0">
   <div class="ruler-v flex-shrink-0 d-flex flex-column">
    <div class="ruler-h flex-shrink-0"><svg width="21" height="21"><path d="M8.500 7v12M5 9.500h14" stroke="#333" stroke-dasharray="1 2"/><path d="M9 10l6 6" stroke="#222"/><path d="M16 12v5h-5z"/></svg></div>
    <svg class="rule flex-fill w-100" id="rv" style="min-height:0"></svg>
   </div>
   <div class="d-flex flex-column flex-fill" style="min-width:0">
    <svg class="rule ruler-h w-100" id="rh"></svg>
    <div class="d-flex flex-fill" style="min-height:0">
     <div class="paper flex-fill">
      <svg class="position-absolute w-100 h-100" fill="none" stroke="#222">
       <path d="M358 71h382v541H358z" fill="#c2c2c2" stroke="none"/>
       <path d="M352.500 67.500h381v539h-381z" fill="#fff" stroke="#8c8c8c"/>
       <g stroke-width=".8">
       <ellipse cx="97.500" cy="63.500" rx="92" ry="29" transform="rotate(-9.700 97.500 63.500)"/>
       <ellipse cx="482.500" cy="234.500" rx="29" ry="91"/>
       <g transform="translate(391 234.500) matrix(1 0 -1 1 0 0)"><ellipse rx="29" ry="91" vector-effect="non-scaling-stroke"/></g>
       <g transform="translate(299.500 234.500) matrix(1 0 -2 1 0 0)"><ellipse rx="29" ry="91" vector-effect="non-scaling-stroke"/></g>
       </g>
       <path d="M480.500 141.500h3v3h-3z" stroke="#000" fill="#fff"/>
      </svg>
     </div>
     <div class="vscroll d-flex flex-column flex-shrink-0">
      <span class="arrow"><i class="caret up"></i></span><span style="flex:144"></span><span class="vthumb d-flex align-items-center justify-content-center" style="flex:352"><svg width="6" height="8"><path d="M0 1.500h6M0 4.500h6M0 7.500h6" stroke="#444"/></svg></span><span style="flex:146"></span><span class="arrow"><i class="caret"></i></span>
     </div>
    </div>
    <div class="pages d-flex flex-shrink-0">
     <div class="d-flex align-items-start" style="flex:1 1 0;min-width:0">
      <button style="margin:1px 3px 0 2px" aria-label="Добавить страницу"><svg width="12" height="14"><use href="#addpage"/></svg></button>
      <svg width="36" height="16"><g fill="#777"><path d="M4 3h1v9H4zM11 3v9L6 7.500zM28 3v9l-5-4.500z"/></g></svg>
      <span class="pagetext text-center" style="width:65px">1 из 1</span>
      <svg width="36" height="16" class="ms-1"><g fill="#777"><path d="M4 3v9l5-4.500zM20 3v9l6-4.500zM27 3h1v9h-1z"/></g></svg>
      <button style="margin:1px 3px 0 0" aria-label="Добавить страницу в конец"><svg width="12" height="14"><use href="#addpage"/></svg></button>
      <button class="pagetab pagetext pe-1">Страница 1</button>
      <svg class="ms-auto" width="8" height="18"><path d="M2.500 4v11" stroke="#aaa" stroke-width="2" stroke-dasharray="2 2"/><path d="M7.500 0v18" stroke="#888"/></svg>
     </div>
     <div class="hscroll d-flex" style="flex:1 1 0">
      <span class="arrow"><svg width="5" height="8"><path d="M5 0v8L0 4z"/></svg></span><span style="width:24px"></span>
      <span class="hthumb flex-fill d-flex align-items-center justify-content-center"><svg width="9" height="7"><path d="M1.500 0v6M4.500 0v6M7.500 0v6" stroke="#444"/></svg></span>
      <span class="arrow"><svg width="5" height="8"><path d="M0 0v8l5-4z"/></svg></span>
      <button aria-label="Навигатор" class="me-1"><svg width="17" height="17" fill="none" stroke="#446"><circle cx="7" cy="7" r="4.500"/><path d="M4 7h6M7 4v6"/><path d="M10 10l5 5" stroke-width="2"/></svg></button>
     </div>
    </div>
   </div>
  </div>
  <div class="docpal d-flex align-items-center flex-shrink-0">
   <svg width="12" height="14"><path d="M4.500 1v12" stroke="#bbb" stroke-width="2" stroke-dasharray="2 2"/></svg>
   <button class="round" aria-label="Меню палитры"></button>
   <svg class="ico"><use href="#drop1"/></svg>
   <button class="none" aria-label="Нет цвета"><svg width="12" height="12"><use href="#X"/></svg></button>
   <em class="flex-fill text-center pe-4">Перетащите сюда цвета (или объекты), чтобы сохранить их вместе с документом</em>
  </div>
 </section>

 <aside class="docker">
  <div class="dockhead d-flex align-items-center"><span>Преобразования</span>
   <svg class="ms-auto me-1" width="14" height="10"><path d="M3 1l4 4-4 4M7 1l4 4-4 4" fill="none" stroke="#335"/></svg>
   <button aria-label="Свернуть панель"><svg width="15" height="15"><path d="M3.500 8.500h8v3h-8z" fill="#fff" stroke="#456"/></svg></button>
   <button class="shut me-1" style="margin-left:3px" aria-label="Закрыть панель"><svg width="15" height="15"><path d="M3 3l9 9M12 3l-9 9" stroke="#5b2020" stroke-width="4"/><path d="M4 4l7 7M11 4l-7 7" stroke="#fff" stroke-width="2"/></svg></button>
  </div>
  <div class="d-flex" style="margin:9px 0 8px 38px">
   <button class="tool" aria-label="Положение"><svg class="ico"><use href="#move"/></svg></button>
   <button class="tool" aria-label="Поворот"><svg class="ico"><use href="#turn"/></svg></button>
   <button class="tool" aria-label="Масштаб и отражение"><svg class="ico"><use href="#scale"/></svg></button>
   <button class="tool" aria-label="Размер"><svg class="ico"><use href="#size"/></svg></button>
   <button class="tool on" aria-label="Наклон"><svg class="ico"><use href="#skew"/></svg></button>
  </div>
  <div class="rulerline"></div>
  <div class="dockrow d-flex align-items-center" style="margin-top:11px"><label class="lbl" for="sx">x:</label><div class="field"><input id="sx" value="-45,0"><span class="spin"><button aria-label="Больше"><i class="caret up"></i></button><button aria-label="Меньше"><i class="caret"></i></button></span></div><span class="deg">°</span></div>
  <div class="dockrow d-flex align-items-center" style="margin-top:2px"><label class="lbl" for="sy">y:</label><div class="field"><input id="sy" value="0,0"><span class="spin"><button aria-label="Больше"><i class="caret up"></i></button><button aria-label="Меньше"><i class="caret"></i></button></span></div><span class="deg">°</span></div>
  <div class="d-flex align-items-center" style="margin:8px 0 8px 56px;gap:3px"><input type="checkbox" class="tick" id="anchor" checked><label for="anchor" class="text-nowrap">Использовать точку привязки</label></div>
  <svg width="40" height="40" style="margin:0 0 15px 57px" fill="#fff" stroke="#8d8da0"><rect x=".5" y=".5" width="12" height="12" rx="3" fill="#c4c4c8" stroke="#444"/><path d="M6.500 6.500h30v30h-30z" fill="none" stroke-width="2"/><path d="M3.500 3.500h6v6h-6zM18.500 3.500h6v6h-6zM33.500 3.500h6v6h-6zM3.500 18.500h6v6h-6zM18.500 18.500h6v6h-6zM33.500 18.500h6v6h-6zM3.500 33.500h6v6h-6zM18.500 33.500h6v6h-6zM33.500 33.500h6v6h-6z"/></svg>
  <div class="rulerline"></div>
  <div class="dockrow d-flex align-items-center" style="margin-top:7px;margin-bottom:7px"><label class="lbl" for="cp">Копии:</label><div class="field"><input id="cp" value="2"><span class="spin"><button aria-label="Больше"><i class="caret up"></i></button><button aria-label="Меньше"><i class="caret"></i></button></span></div></div>
  <div class="rulerline"></div>
  <button class="apply d-block">Применить</button>
  <svg class="scribble" width="170" height="106" fill="none" stroke="#e01414" stroke-width="2"><path d="M14 23L23 19M15 25Q24 20 27 15T42 10Q60 5 84 5 118 8 136 23 150 33 155 40 166 46 162 50 157 56 153 62L153 72Q150 78 142 79 136 85 133 87 112 98 89 98 60 97 43 86 5 64 5 45 6 30 20 21"/></svg>
 </aside>
 <aside class="palette d-flex flex-column align-items-center" aria-label="Палитра">
  <svg width="16" height="10"><path d="M3 4.500h11" stroke="#bbb" stroke-width="2" stroke-dasharray="2 2"/></svg>
  <button class="round" aria-label="Меню"></button>
  <svg class="ico" style="opacity:.35;margin-top:2px"><use href="#drop1"/></svg>
  <button class="drop" aria-label="Вверх" style="height:16px"><i class="caret up"></i></button>
  <button class="none" aria-label="Нет" style="height:16px;width:15px;margin:1px 0 2px 1px"><svg width="13" height="14"><use href="#X"/></svg></button>
  <div id="sw"></div>
  <button class="drop" aria-label="Вниз" style="height:18px"><i class="caret"></i></button>
  <button aria-label="Развернуть палитру"><svg width="10" height="14"><path d="M1 4h2v9H1zM9 4v9L3 8.500z"/></svg></button>
 </aside>
</main>

<footer class="status d-flex flex-shrink-0">
 <div style="width:200px"><div class="line gap-3"><span>( 111,895; -18,369 )</span><i class="play"></i></div><div class="line">Сведения о цвете</div></div>
 <div class="flex-fill d-flex flex-column align-items-center"><div><div class="line">Сведения об объекте</div><div class="line" style="padding-left:36px"><i class="play"></i></div></div></div>
 <div class="d-flex" style="width:404px">
  <svg class="ico" style="margin:1px 54px 0 85px"><use href="#monitor"/></svg>
  <div><div class="line"><svg class="ico"><use href="#fill"/></svg><span class="none ms-1 me-1" style="width:16px;height:16px"><svg width="14" height="14"><use href="#X"/></svg></span>Нет</div>
  <div class="line"><svg class="ico"><use href="#nib"/></svg><span class="none outlinecolor ms-1 me-1" style="width:16px;height:16px"></span><span style="white-space:pre">C:0 M:0 Y:0 K:100  0,200 мм</span></div></div>
  <button class="tool fly ms-auto mt-1 me-1" aria-label="Учетная запись"><svg class="ico"><use href="#user"/></svg></button>
 </div>
</footer>

<script src="https://cdn.jsdelivr.net/npm/bootstrap@5.3.0/dist/js/bootstrap.bundle.min.js"></script>
<script>
const $ = id => document.getElementById(id);
const btn = (id, cls, dim) => `<button class="tool ${cls}" aria-label="${id}"><svg class="ico"${dim ? ' style="stroke:#bdbdbd"' : ''}><use href="#${id}"/></svg></button>`;
$('align').innerHTML = btn('options','') + btn('al','') + ['al2','ar','at','ab','ac','am'].map(i => btn(i,'',true)).join('') + ['p1','p2','p3'].map(i => btn(i,'')).join('');
$('toolbox').innerHTML = ['pick','shape','crop','zoomt','free','smart','rect','ell','poly','basic','textt','table','dim','conn','blend','pipet','nib','fill','ifill']
  .map(i => btn(i, (i === 'pick' ? 'on ' : '') + (i === 'textt' || i === 'table' ? '' : 'fly'))).join('');
$('sw').innerHTML = ('#161616 #303030 #4a4a4a #656565 #7e7e7e #979797 #adadad #c3c3c3 #dadada #ececec #ffffff #3c2a94 #00a5d6 #00a556 #ffe114 #e02a1c #e6007e #b04a8c #f08000 #ffb6b8 #7c6c62 #d8d4f4 #b0a4e2 #7490d0 #8a70ca #9488b4 #50648e #5a506c #70849c #0094cc #acdcf6 #b4c8d8 #90a2ac #6c7684 #444c50 #54706c')
  .split(' ').map(c => `<div class="swatch" style="background:${c}"></div>`).join('');
/* rulers: one tick every 5 mm, numbered every 50 mm */
const MM = 1.8143;
let h = '', v = '';
for (let m = -190; m <= 410; m += 5) {
  const x = Math.round(353 + m * MM) + .5, big = m % 50 === 0;
  h += `M${x} ${big ? 13 : 17}V19`;
}
for (let m = -45; m <= 330; m += 5) {
  const y = Math.round(607 - m * MM) + .5, big = m % 50 === 0;
  v += `M${big ? 14 : 17} ${y}H19`;
}
let ht = '', vt = '';
for (let m = -150; m <= 350; m += 50) ht += `<text x="${Math.round(353 + m * MM)}" y="11" text-anchor="middle">${Math.abs(m)}</text>`;
for (let m = 0; m <= 300; m += 50) vt += `<text transform="translate(14 ${Math.round(607 - m * MM)}) rotate(-90)" text-anchor="middle">${m}</text>`;
$('rh').innerHTML = `<path d="${h}" stroke="#111"/>${ht}<text x="1100" y="11" text-anchor="end">миллиметры</text>`;
$('rv').innerHTML = `<path d="${v}" stroke="#111"/>${vt}<text transform="translate(14 662) rotate(-90)" text-anchor="middle">миллиметры</text>`;
</script>
</body>
</html>
